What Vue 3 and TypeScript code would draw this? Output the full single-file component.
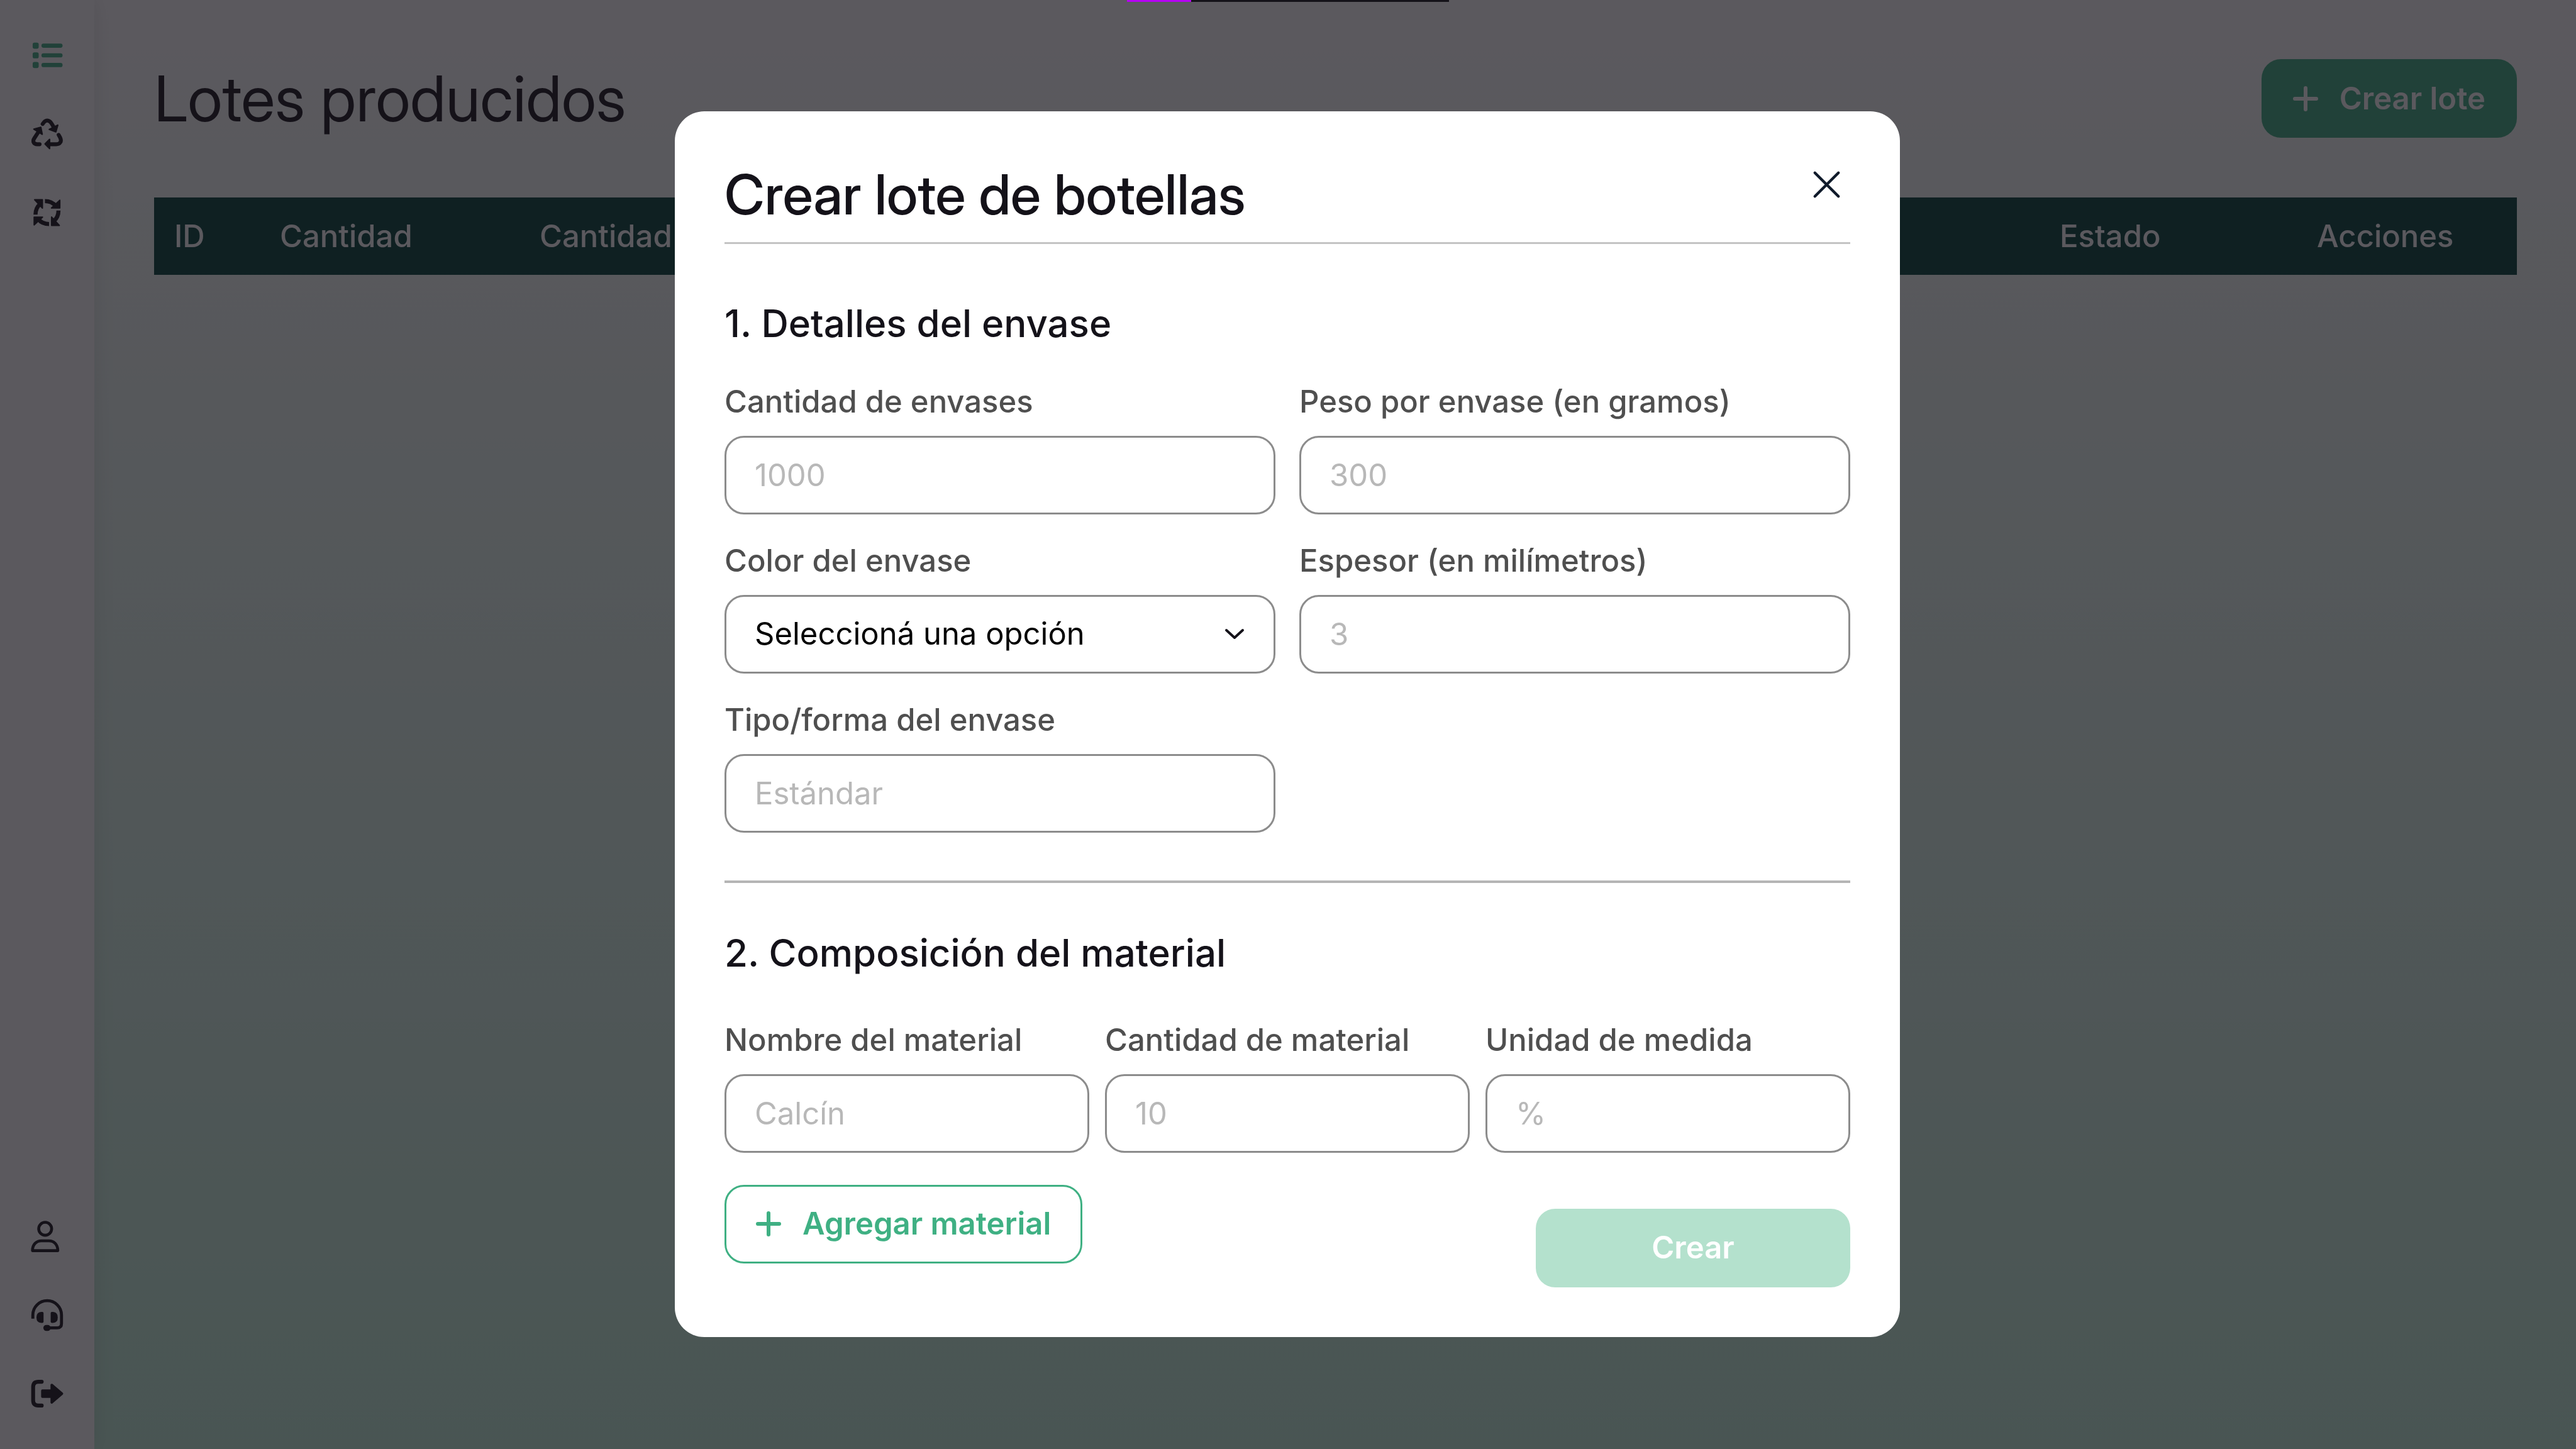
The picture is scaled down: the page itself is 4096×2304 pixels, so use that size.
<script setup lang="ts">
import { ref } from 'vue'

interface Field {
  id: string
  label: string
  placeholder: string
  kind: 'text' | 'select'
}

const columns = [
  { name: 'ID', cls: 'col-id' },
  { name: 'Cantidad', cls: 'col-qty' },
  { name: 'Cantidad', cls: 'col-wide' },
  { name: 'Estado', cls: 'col-state' },
  { name: 'Acciones', cls: 'col-actions' },
]

const packaging: Field[] = [
  { id: 'cantidad', label: 'Cantidad de envases', placeholder: '1000', kind: 'text' },
  { id: 'peso', label: 'Peso por envase (en gramos)', placeholder: '300', kind: 'text' },
  { id: 'color', label: 'Color del envase', placeholder: 'Seleccioná una opción', kind: 'select' },
  { id: 'espesor', label: 'Espesor (en milímetros)', placeholder: '3', kind: 'text' },
  { id: 'tipo', label: 'Tipo/forma del envase', placeholder: 'Estándar', kind: 'text' },
]

const material: Field[] = [
  { id: 'material-nombre', label: 'Nombre del material', placeholder: 'Calcín', kind: 'text' },
  { id: 'material-cantidad', label: 'Cantidad de material', placeholder: '10', kind: 'text' },
  { id: 'material-unidad', label: 'Unidad de medida', placeholder: '%', kind: 'text' },
]

const quarterTurns = [0, 90, 180, 270]
const progress = ref(20)
</script>

<template>
  <div class="app">
    <nav class="sidebar">
      <div class="nav-group">
        <a href="#lotes" class="nav-link active">
          <svg viewBox="0 0 52 52">
            <g fill="currentColor">
              <rect x="2" y="5" width="10" height="10" rx="3" />
              <rect x="2" y="21" width="10" height="10" rx="3" />
              <rect x="2" y="37" width="10" height="10" rx="3" />
            </g>
            <path d="M20 10H48M20 26H48M20 42H48" fill="none" stroke="currentColor" stroke-width="7" stroke-linecap="round" />
          </svg>
        </a>
        <a href="#reciclaje" class="nav-link">
          <svg viewBox="0 0 52 52">
            <g fill="none" stroke="currentColor" stroke-width="6.4" stroke-linecap="round" stroke-linejoin="round">
              <path d="M18.5 9.5C21 5.500 23 3.700 26 3.700C29.500 3.700 31.500 5.500 33.500 9L37 15" />
              <path d="M12 22L4.800 33C1.200 38.500 4 43 9.500 43H13.500" />
              <path d="M45 27.500L47.500 32C50.500 38 47.500 43 41 43H30" />
            </g>
            <g fill="currentColor" stroke="currentColor" stroke-width="2.400" stroke-linejoin="round">
              <path d="M29.500 18.500L43.500 11.500L40.300 22.500Z" />
              <path d="M4 18L15.500 15L17.800 26.500Z" />
              <path d="M22.500 42.500L30 35V50.200Z" />
            </g>
          </svg>
        </a>
        <a href="#ciclo" class="nav-link">
          <svg viewBox="0 0 52 52">
            <g v-for="turn in quarterTurns" :key="turn" :transform="`rotate(${turn} 25.700 26)`">
              <path d="M22.300 7C30 7 35.500 9.500 40 15" fill="none" stroke="currentColor" stroke-width="6.800" />
              <path d="M47 5.500V18.500H33Z" fill="currentColor" stroke="currentColor" stroke-width="2" stroke-linejoin="round" />
            </g>
          </svg>
        </a>
      </div>
      <div class="nav-group">
        <a href="#perfil" class="nav-link">
          <svg viewBox="0 0 52 52" fill="none" stroke="currentColor" stroke-width="4.800" stroke-linejoin="round">
            <circle cx="22.700" cy="13.300" r="10.700" />
            <path d="M1.700 49.500C1.700 39.500 8 33.300 16.500 33.300H28.800C37.500 33.300 43.600 39.500 43.600 49.500Z" />
          </svg>
        </a>
        <a href="#soporte" class="nav-link">
          <svg viewBox="0 0 52 52">
            <path d="M2.300 32V26A23.700 23.700 0 0 1 49.700 26V40Q49.700 47.200 42.500 47.200H27" fill="none" stroke="currentColor" stroke-width="5" />
            <g fill="currentColor">
              <path d="M20 22.700V37Q20 39 18 39H16Q8.300 39 8.300 30T16 20.700H18Q20 20.700 20 22.700Z" />
              <path d="M31.800 22.700V37Q31.800 39 33.800 39H35.800Q43.500 39 43.500 30T35.800 20.700H33.800Q31.800 20.700 31.800 22.700Z" />
              <rect x="19.700" y="42.300" width="12" height="10" rx="5" />
            </g>
          </svg>
        </a>
        <a href="#salir" class="nav-link">
          <svg viewBox="0 0 52 52">
            <path d="M17 6.300H11.500Q2.800 6.300 2.800 15V37Q2.800 45.700 11.500 45.700H17" fill="none" stroke="currentColor" stroke-width="6.400" stroke-linecap="round" />
            <path d="M18 21H33.500V11.500L50.500 26L33.500 40.500V31H18Z" fill="currentColor" stroke="currentColor" stroke-width="4" stroke-linejoin="round" />
          </svg>
        </a>
      </div>
    </nav>

    <main class="main">
      <header class="page-header">
        <h1>Lotes producidos</h1>
        <button type="button" class="btn primary">
          <svg class="plus" viewBox="0 0 40 40"><path d="M20 3V37M3 20H37" /></svg>
          Crear lote
        </button>
      </header>
      <table class="lots">
        <thead>
          <tr>
            <th v-for="col in columns" :key="col.cls" :class="col.cls" scope="col">{{ col.name }}</th>
          </tr>
        </thead>
      </table>
    </main>

    <div class="backdrop">
      <form class="modal" role="dialog" aria-labelledby="modal-title" @submit.prevent>
        <header class="modal-header">
          <h2 id="modal-title">Crear lote de botellas</h2>
          <button type="button" class="close">
            <svg viewBox="0 0 24 24"><path d="M6 6L18 18M18 6L6 18" /></svg>
          </button>
        </header>

        <section class="packaging">
          <h3>1. Detalles del envase</h3>
          <div class="grid two">
            <div v-for="field in packaging" :key="field.id" class="field">
              <label :for="field.id">{{ field.label }}</label>
              <div v-if="field.kind === 'select'" class="select-wrap">
                <select :id="field.id" class="control">
                  <option>{{ field.placeholder }}</option>
                </select>
                <svg class="chevron" viewBox="0 0 30 16"><path d="M2 2L15 14L28 2" /></svg>
              </div>
              <input v-else :id="field.id" class="control" type="text" :placeholder="field.placeholder" />
            </div>
          </div>
        </section>

        <section class="composition">
          <h3>2. Composición del material</h3>
          <div class="grid three">
            <div v-for="field in material" :key="field.id" class="field">
              <label :for="field.id">{{ field.label }}</label>
              <input :id="field.id" class="control" type="text" :placeholder="field.placeholder" />
            </div>
          </div>
        </section>

        <footer class="actions">
          <button type="button" class="btn outline">
            <svg class="plus" viewBox="0 0 40 40"><path d="M20 3V37M3 20H37" /></svg>
            Agregar material
          </button>
          <button type="submit" class="btn submit" disabled>Crear</button>
        </footer>
      </form>
    </div>

    <div class="progress">
      <div class="progress-bar" :style="{ width: progress + '%' }"></div>
    </div>
  </div>
</template>

<style>
body {
  margin: 0;
}
</style>

<style scoped>
.app {
  --green: #3fb083;
  --ink: #141219;
  display: flex;
  min-height: 100vh;
  font-family: Inter, "Liberation Sans", sans-serif;
  font-size: 49px;
  line-height: 60px;
  color: var(--ink);
}

.app *,
.app {
  box-sizing: border-box;
}

h1,
h2,
h3 {
  margin: 0;
}

h1,
h2 {
  font-family: "Inter Display", Inter, "Liberation Sans", sans-serif;
}

button,
input,
select {
  font: inherit;
}

svg {
  display: block;
  overflow: visible;
}

.sidebar {
  position: relative;
  display: flex;
  flex: none;
  flex-direction: column;
  justify-content: space-between;
  align-items: center;
  width: 150px;
  padding: 63px 0;
  background: #fff;
  box-shadow: 0 0 31px rgba(0, 0, 0, 0.1);
}

.nav-group {
  display: flex;
  flex-direction: column;
  gap: 75px;
}

.nav-link {
  display: block;
  color: var(--ink);
}

.nav-link svg {
  width: 50px;
  height: 50px;
}

.nav-link.active {
  color: var(--green);
}

.main {
  flex: 1;
  min-width: 0;
  padding: 94px 94px 94px 95px;
  background: linear-gradient(#fff, #c3f2db);
}

.page-header {
  display: flex;
  justify-content: space-between;
  align-items: center;
  margin-bottom: 95px;
}

h1 {
  font-size: 100px;
  line-height: 120px;
  font-weight: 400;
}

.btn {
  display: flex;
  align-items: center;
  justify-content: center;
  gap: 34px;
  height: 125px;
  padding: 0 47px;
  border: 3px solid transparent;
  border-radius: 31px;
  font-weight: 600;
}

.btn.primary {
  background: var(--green);
  color: #fff;
}

.btn.outline {
  border-color: var(--green);
  background: #fff;
  color: var(--green);
}

.btn.submit {
  width: 500px;
  background: #b4e1cd;
  color: #fff;
}

.plus {
  width: 40px;
  height: 40px;
}

.plus path {
  fill: none;
  stroke: currentColor;
  stroke-width: 6;
  stroke-linecap: round;
}

.lots {
  width: 100%;
  table-layout: fixed;
  border-collapse: collapse;
}

.lots th {
  height: 123px;
  padding: 0 32px;
  background: #004238;
  color: #fff;
  font-weight: 500;
  text-align: left;
}

.col-id {
  width: 168px;
}

.col-qty {
  width: 413px;
}

.col-state {
  width: 409px;
}

.col-actions {
  width: 350px;
}

.backdrop {
  position: fixed;
  inset: 0;
  display: flex;
  align-items: center;
  justify-content: center;
  padding: 0 2px 2px 0;
  background: rgba(22, 19, 26, 0.7);
}

.modal {
  width: 1948px;
  max-width: 96vw;
  padding: 79px;
  border-radius: 47px;
  background: #fff;
}

.modal-header {
  display: flex;
  justify-content: space-between;
  align-items: flex-start;
  padding-bottom: 23px;
  border-bottom: 3px solid #c4c4c4;
}

h2 {
  font-size: 88px;
  line-height: 106px;
  font-weight: 500;
}

h3 {
  font-size: 60px;
  line-height: 75px;
  font-weight: 500;
}

.close {
  padding: 0;
  border: 0;
  background: none;
  color: #0f1a2a;
}

.close svg {
  width: 75px;
  height: 75px;
}

.close path {
  fill: none;
  stroke: currentColor;
  stroke-width: 1.4;
  stroke-linecap: round;
}

.packaging {
  padding: 89px 0 76px;
  border-bottom: 4px solid #b5b5b5;
}

.packaging h3 {
  margin-bottom: 57px;
}

.composition {
  padding: 74px 0 51px;
}

.composition h3 {
  margin-bottom: 71px;
}

.grid {
  display: grid;
}

.two {
  grid-template-columns: repeat(2, minmax(0, 1fr));
  gap: 44px 38px;
}

.three {
  grid-template-columns: repeat(3, minmax(0, 1fr));
  gap: 25px;
}

.field {
  display: flex;
  flex-direction: column;
  gap: 24px;
}

label {
  color: #4f4f4f;
  font-weight: 500;
}

.control {
  display: block;
  width: 100%;
  height: 125px;
  padding: 0 45px;
  border: 3px solid #8c8c8c;
  border-radius: 31px;
  background: #fff;
  color: #000;
  appearance: none;
}

.control::placeholder {
  color: #b8b8b8;
  opacity: 1;
}

.select-wrap {
  position: relative;
}

.chevron {
  position: absolute;
  top: 0;
  bottom: 0;
  right: 50px;
  width: 30px;
  height: 16px;
  margin: auto 0;
  pointer-events: none;
}

.chevron path {
  fill: none;
  stroke: var(--ink);
  stroke-width: 4;
  stroke-linecap: round;
  stroke-linejoin: round;
}

.actions {
  display: flex;
  justify-content: space-between;
  align-items: flex-start;
}

.actions .submit {
  margin-top: 38px;
}

.progress {
  position: fixed;
  top: 0;
  left: 0;
  right: 0;
  width: 512px;
  height: 3px;
  margin: 0 auto;
  background: #141219;
}

.progress-bar {
  height: 100%;
  background: #b700f5;
}
</style>
